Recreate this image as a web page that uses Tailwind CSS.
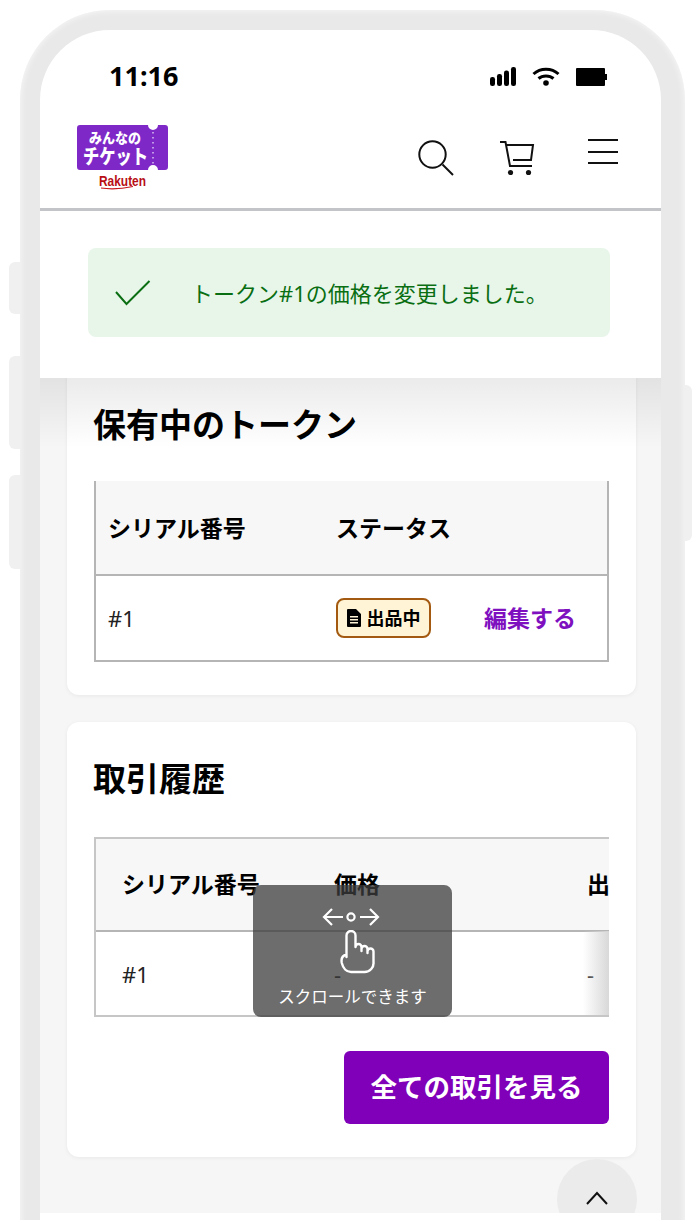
<!DOCTYPE html>
<html lang="ja">
<head>
  <meta charset="UTF-8" />
  <meta name="viewport" content="width=device-width, initial-scale=1.0"/>
  <title>みんなのチケット</title>
  <script src="https://cdn.jsdelivr.net/npm/@tailwindcss/browser@4"></script>
</head>
<body class="bg-white">
  <div class="relative w-[700px] h-[1220px] overflow-hidden bg-white font-['Noto_Sans','Noto_Sans_CJK_JP',sans-serif] text-black">

    <!-- side buttons -->
    <div class="absolute left-[9px] top-[262px] w-[12px] h-[52px] rounded-l-md bg-[#f0f0f0]"></div>
    <div class="absolute left-[9px] top-[356px] w-[12px] h-[93px] rounded-l-md bg-[#f0f0f0]"></div>
    <div class="absolute left-[9px] top-[475px] w-[12px] h-[94px] rounded-l-md bg-[#f0f0f0]"></div>
    <div class="absolute left-[683px] top-[385px] w-[9px] h-[156px] rounded-r-md bg-[#f0f0f0]"></div>

    <!-- phone -->
    <div class="relative ml-5 mt-[10px] w-[665px] h-[1230px] rounded-t-[90px] bg-[#e9e9e9] pt-5 pl-5 shadow-[inset_0_0_7px_rgba(255,255,255,0.8)]">
      <div class="w-[621px] h-[1190px] rounded-t-[70px] overflow-hidden bg-white">

        <!-- status bar -->
        <div class="flex items-start h-[80px] pl-[69px] pr-[54px] pt-[26px]">
          <span class="text-[27px] leading-[40px] font-bold">11:16</span>
          <div class="ml-auto flex items-center gap-[16px] pt-[11px]">
            <svg width="26" height="19" viewBox="0 0 26 19" fill="#000">
              <rect x="0" y="10" width="5" height="9" rx="2.2"/>
              <rect x="7" y="7" width="5" height="12" rx="2.2"/>
              <rect x="14" y="3.5" width="5" height="15.5" rx="2.2"/>
              <rect x="21" y="0" width="5" height="19" rx="2.2"/>
            </svg>
            <svg width="28" height="19" viewBox="0 0 28 19" fill="none" stroke="#000" stroke-width="3">
              <path d="M1.5 7 C8.5 0.5 19.5 0.5 26.5 7"/>
              <path d="M6.5 11.5 C10.5 8 17.5 8 21.5 11.5"/>
              <circle cx="14" cy="16" r="2.8" fill="#000" stroke="none"/>
            </svg>
            <svg width="31" height="18" viewBox="0 0 31 18" fill="#000">
              <rect x="0" y="0" width="29" height="18" rx="1"/>
              <rect x="29" y="6" width="2" height="6"/>
            </svg>
          </div>
        </div>

        <!-- header -->
        <header class="flex items-start h-[101px] border-b-[3px] border-[#c3c4c7] pl-[37px] pr-[43px] pt-[14px]">
          <svg width="92" height="66" viewBox="0 0 92 66">
            <path d="M3 1 H71 a5 5 0 0 0 10 0 H88 a3 3 0 0 1 3 3 V43 a3 3 0 0 1 -3 3 H81 a5 5 0 0 0 -10 0 H3 a3 3 0 0 1 -3 -3 V4 a3 3 0 0 1 3 -3 Z" fill="#7e28c8"/>
            <path d="M76 8 V40" stroke="#d9c2f0" stroke-width="1.5" stroke-dasharray="1.5 3.5"/>
            <text x="12" y="19" font-size="14" font-weight="900" fill="#fff" textLength="52" lengthAdjust="spacingAndGlyphs">みんなの</text>
            <text x="6" y="40" font-size="20" font-weight="900" fill="#fff" textLength="65" lengthAdjust="spacingAndGlyphs">チケット</text>
            <text x="22" y="62" font-family="'Liberation Sans',sans-serif" font-size="14" font-weight="700" fill="#b80f14" textLength="47" lengthAdjust="spacingAndGlyphs">Rakuten</text>
            <path d="M24 64 C34 65.5 44 65 56 62.5" stroke="#c8141a" stroke-width="1.2" fill="none"/>
          </svg>
          <div class="ml-auto flex items-start">
            <svg class="mt-[16px]" width="36" height="36" viewBox="0 0 36 36" fill="none" stroke="#111" stroke-width="2">
              <circle cx="14.5" cy="14.5" r="13.2"/>
              <path d="M24.5 24.5 L35 35"/>
            </svg>
            <svg class="ml-[45px] mt-[16px]" width="36" height="36" viewBox="0 0 36 36" fill="none" stroke="#111" stroke-width="2">
              <path d="M1 2 H6.5 L11 26 H33"/>
              <path d="M7 5 H34 L32 20 H14"/>
              <circle cx="11.5" cy="32.5" r="2.6" fill="#111" stroke="none"/>
              <circle cx="29.5" cy="32.5" r="2.6" fill="#111" stroke="none"/>
            </svg>
            <div class="ml-[53px] mt-[15px] w-[30px] flex flex-col gap-[9.5px]">
              <div class="h-[2px] bg-[#111]"></div>
              <div class="h-[2px] bg-[#111]"></div>
              <div class="h-[2px] bg-[#111]"></div>
            </div>
          </div>
        </header>

        <!-- alert -->
        <div class="h-[167px] bg-white px-[48px] pt-[37px]">
          <div class="flex items-center h-[89px] w-[522px] rounded-lg bg-[#e8f6ea] pl-[27px]">
            <svg width="36" height="26" viewBox="0 0 36 26" fill="none" stroke="#0a6e12" stroke-width="2">
              <path d="M1 12 L11.5 24 L34.5 1"/>
            </svg>
            <span class="ml-[40px] text-[22px] leading-none text-[#0a6e12]">トークン#1の価格を変更しました。</span>
          </div>
        </div>

        <!-- main -->
        <main class="relative h-[835px] bg-[#f6f6f6] px-[27px] overflow-hidden">
          <div class="absolute inset-x-0 top-0 z-10 h-[70px] bg-gradient-to-b from-black/8 to-transparent pointer-events-none"></div>

          <!-- holdings -->
          <section class="-mt-[12px] w-[569px] h-[329px] rounded-xl bg-white px-[27px] shadow-[0_1px_4px_rgba(0,0,0,0.06)]">
            <h2 class="h-[115px] pt-[36px] text-[33px] leading-[46px] font-bold -ml-px">保有中のトークン</h2>
            <table class="w-[515px] table-fixed border-x-2 border-b-2 border-[#b5b5b5] text-left">
              <colgroup>
                <col class="w-[241px]" />
                <col class="w-[148px]" />
                <col />
              </colgroup>
              <thead>
                <tr class="h-[94px] bg-[#f7f7f7] border-b-2 border-[#b5b5b5] text-[23px]">
                  <th class="pl-[12px] pt-[2px] font-bold">シリアル番号</th>
                  <th class="pt-[2px] font-bold" colspan="2">ステータス</th>
                </tr>
              </thead>
              <tbody>
                <tr class="h-[86px]">
                  <td class="pl-[12px] text-[22px] text-[#222]">#1</td>
                  <td>
                    <span class="flex items-center justify-center w-[95px] h-[40px] rounded-lg border-2 border-[#a35a10] bg-[#fff4d6] text-[18px] font-bold">
                      <svg class="mr-[6px]" width="14" height="18" viewBox="0 0 14 18" fill="#000">
                        <path d="M1 0 H9 L14 5 V17 a1 1 0 0 1 -1 1 H1 a1 1 0 0 1 -1 -1 V1 a1 1 0 0 1 1 -1 Z M3 7 V8.5 H11 V7 Z M3 10 V11.5 H11 V10 Z M3 13 V14.5 H11 V13 Z" fill-rule="evenodd"/>
                      </svg>
                      出品中
                    </span>
                  </td>
                  <td class="text-[23px] font-bold text-[#7f10c0]">編集する</td>
                </tr>
              </tbody>
            </table>
          </section>

          <!-- history -->
          <section class="mt-[27px] w-[569px] h-[435px] rounded-xl bg-white px-[27px] shadow-[0_1px_4px_rgba(0,0,0,0.06)]">
            <h2 class="h-[115px] pt-[34px] text-[33px] leading-[46px] font-bold -ml-px">取引履歴</h2>
            <div class="relative w-[515px] h-[180px]">
              <div class="relative h-[180px] overflow-hidden border-y-2 border-l-2 border-[#c6c6c6]">
                <table class="w-[700px] table-fixed text-left">
                  <colgroup>
                    <col class="w-[238px]" />
                    <col class="w-[253px]" />
                    <col />
                  </colgroup>
                  <thead>
                    <tr class="h-[92px] bg-[#f7f7f7] border-b-2 border-[#b5b5b5] text-[23px]">
                      <th class="pl-[26px] font-bold whitespace-nowrap">シリアル番号</th>
                      <th class="font-bold">価格</th>
                      <th class="font-bold">出品日</th>
                    </tr>
                  </thead>
                  <tbody>
                    <tr class="h-[85px] text-[22px] text-[#222]">
                      <td class="pl-[26px]">#1</td>
                      <td>-</td>
                      <td>-</td>
                    </tr>
                  </tbody>
                </table>
                <!-- scroll edge fade -->
                <div class="absolute right-0 top-[92px] w-[26px] h-[85px] bg-gradient-to-r from-transparent to-[#d8d8d8]"></div>
              </div>
              <!-- scroll hint -->
              <div class="absolute left-[159px] top-[48px] w-[199px] h-[132px] rounded-lg bg-[#3c3c3c]/75 flex flex-col items-center pt-[22px] text-white">
                <svg class="-ml-[3px]" width="58" height="20" viewBox="0 0 58 20" fill="none" stroke="#fff" stroke-width="2.2">
                  <path d="M21 10 H2 M10 2 L2 10 L10 18"/>
                  <circle cx="29" cy="10" r="3.6"/>
                  <path d="M38 10 H56 M48 2 L56 10 L48 18"/>
                </svg>
                <svg class="mt-[3px] ml-[10px]" width="36" height="44" viewBox="0 0 36 44" fill="none" stroke="#fff" stroke-width="2.4" stroke-linejoin="round" stroke-linecap="round">
                  <path d="M6.5 27 V5.5 a4.5 4.5 0 0 1 9 0 V17 M15.5 17 a3 3 0 0 1 6 0 V21 M21.5 19 a3 3 0 0 1 6 0 V23 M27.5 21.5 a3 3 0 0 1 6 0 V32 a9 9 0 0 1 -9 10 H11 C6.5 42 3 38 1.8 33 C1 29 2.5 25.5 6.5 24.5"/>
                </svg>
                <span class="mt-[11px] text-[16.5px] leading-[24px] whitespace-nowrap">スクロールできます</span>
              </div>
            </div>
            <div class="mt-[34px] flex justify-end">
              <button class="w-[265px] h-[73px] rounded-md bg-[#7f00b8] text-white text-[26.5px] font-bold">全ての取引を見る</button>
            </div>
          </section>

          <!-- back to top -->
          <button class="absolute left-[517px] top-[781px] w-[80px] h-[80px] rounded-full bg-[#ebebeb] flex justify-center pt-[32px]">
            <svg width="24" height="14" viewBox="0 0 24 14" fill="none" stroke="#111" stroke-width="2"><path d="M2 13 L12 2 L22 13"/></svg>
          </button>
        </main>
      </div>
    </div>
  </div>
</body>
</html>
